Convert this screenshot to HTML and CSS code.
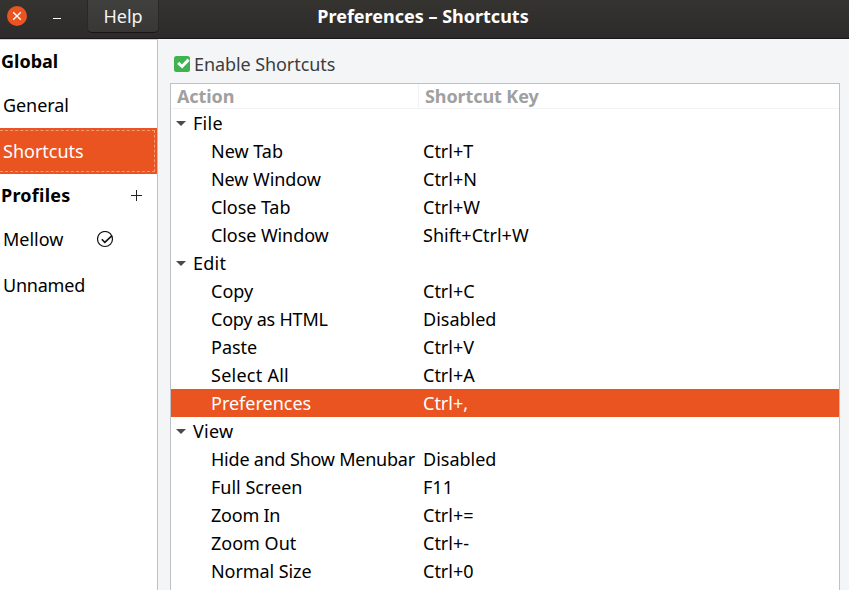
FILE: index.html
```html
<!DOCTYPE html>
<html lang="en">
<head>
<meta charset="utf-8">
<title>Preferences – Shortcuts</title>
<link rel="stylesheet" href="styles.css">
</head>
<body>
<header class="titlebar">
  <svg class="close" viewBox="0 0 20 20"><circle cx="10" cy="10" r="10" fill="#e95420"/><path d="M6.2 6.2l7.6 7.6M13.8 6.2l-7.6 7.6" stroke="#fff" stroke-width="1.4"/></svg>
  <span class="minimize"></span>
  <button class="help">Help</button>
  <h1 class="title">Preferences – Shortcuts</h1>
</header>
<div class="body">
  <nav class="sidebar">
    <div class="heading"><span>Global</span></div>
    <div class="item"><span class="snug">General</span></div>
    <div class="item selected"><span>Shortcuts</span></div>
    <div class="heading"><span class="wide">Profiles</span><svg class="plus" viewBox="0 0 11 11"><path d="M5.5 0v11M0 5.5h11" stroke="#222" stroke-width="1"/></svg></div>
    <div class="item"><span class="name">Mellow</span><svg class="check" viewBox="0 0 17 17"><circle cx="8" cy="8" r="7.5" fill="none" stroke="#111" stroke-width="1.2"/><path d="M4.8 8.3l3 3L15 4.7" fill="none" stroke="#111" stroke-width="1.6"/></svg></div>
    <div class="item"><span class="tight">Unnamed</span></div>
  </nav>
  <main class="content">
    <label class="enable"><svg class="box" viewBox="0 0 16 16"><rect width="16" height="16" rx="2.5" fill="#3eb34f"/><path d="M4.2 6.8l3.9 3.7L14.6 3.6" fill="none" stroke="#fff" stroke-width="3"/></svg><span class="snug">Enable Shortcuts</span></label>
    <div class="tree">
      <div class="head"><span class="action">Action</span><span class="key">Shortcut Key</span></div>
      <div class="row group"><span class="wide">File</span></div>
      <div class="row"><span>New Tab</span><span>Ctrl+T</span></div>
      <div class="row"><span class="snug">New Window</span><span>Ctrl+N</span></div>
      <div class="row"><span class="snug">Close Tab</span><span>Ctrl+W</span></div>
      <div class="row"><span class="snug">Close Window</span><span>Shift+Ctrl+W</span></div>
      <div class="row group"><span class="wide">Edit</span></div>
      <div class="row"><span>Copy</span><span>Ctrl+C</span></div>
      <div class="row"><span class="tight">Copy as HTML</span><span>Disabled</span></div>
      <div class="row"><span>Paste</span><span>Ctrl+V</span></div>
      <div class="row"><span class="wide">Select All</span><span>Ctrl+A</span></div>
      <div class="row active"><span>Preferences</span><span>Ctrl+,</span></div>
      <div class="row group"><span class="wide">View</span></div>
      <div class="row"><span class="tight">Hide and Show Menubar</span><span>Disabled</span></div>
      <div class="row"><span>Full Screen</span><span>F11</span></div>
      <div class="row"><span class="tight">Zoom In</span><span>Ctrl+=</span></div>
      <div class="row"><span>Zoom Out</span><span>Ctrl+-</span></div>
      <div class="row"><span class="snug">Normal Size</span><span>Ctrl+0</span></div>
    </div>
  </main>
</div>
</body>
</html>
```
FILE: styles.css
```css
* { box-sizing: border-box; }
body { margin: 0; height: 590px; overflow: hidden; display: flex; flex-direction: column; background: #f4f5f7; color: #000; font: 18px/28px "Noto Sans", sans-serif; white-space: nowrap; }
.titlebar { position: relative; display: flex; align-items: flex-start; height: 39px; flex: none; background: linear-gradient(#353430, #2d2a2b); border-bottom: 1px solid #1b1718; }
.close { width: 20px; height: 20px; margin: 6px 0 0 7px; }
.minimize { width: 8px; height: 1px; margin: 18px 0 0 26px; background: #fff; }
.help { width: 72px; height: 33px; margin-left: 26px; padding: 0; border: 1px solid #2a2827; border-top: 0; border-bottom-color: #171516; border-radius: 0 0 5px 5px; background: linear-gradient(#40403e, #393736); color: #f4f4f2; font: inherit; }
.title { position: absolute; left: 0; right: 3px; top: 2px; margin: 0; text-align: center; color: #fff; font-size: 18px; line-height: 28px; font-weight: 700; }
.body { flex: 1; min-height: 0; display: flex; }
.sidebar { width: 158px; flex: none; background: #fff; border-right: 1px solid #bfc1c7; border-top: 1px solid #ced0d4; }
.heading { height: 42px; padding: 0 15px 0 1px; display: flex; align-items: center; justify-content: space-between; font-weight: 700; }
.item { height: 46px; padding: 0 0 0 3px; display: flex; align-items: center; }
.selected { position: relative; background: #e95420; color: #fff; }
.selected::after { content: ""; position: absolute; inset: 2px 2px 2px 0; border: 1px dashed #f39a7a; border-left: 0; }
.plus { width: 11px; height: 11px; }
.name { width: 94px; }
.check { width: 17px; height: 17px; }
.snug { letter-spacing: -.08px; }
.tight { letter-spacing: -.22px; }
.wide { letter-spacing: .25px; }
.content { flex: 1; display: flex; flex-direction: column; padding: 11px 9px 0 12px; }
.enable { height: 33px; padding: 0 0 5px 4px; display: flex; align-items: center; gap: 4px; color: #3d3d3d; }
.box { width: 16px; height: 16px; }
.tree { flex: 1; min-height: 0; overflow: hidden; background: #fff; border: 1px solid #bfc1c7; border-bottom: 0; }
.head { height: 25px; display: flex; line-height: 25px; border-bottom: 1px solid #f2f2f4; color: #a0a0a0; font-weight: 700; letter-spacing: -.1px; }
.action { width: 248px; padding-left: 6px; border-right: 1px solid #f2f2f4; }
.key { padding-left: 6px; }
.row { height: 28px; display: grid; grid-template-columns: 212px 1fr; padding-left: 40px; }
.group { position: relative; padding-left: 22px; }
.group::before { content: ""; position: absolute; left: 5px; top: 12px; border: 5px solid transparent; border-top-color: #4a4a4a; border-bottom: 0; }
.active { background: #e95420; color: #fff; }
```
